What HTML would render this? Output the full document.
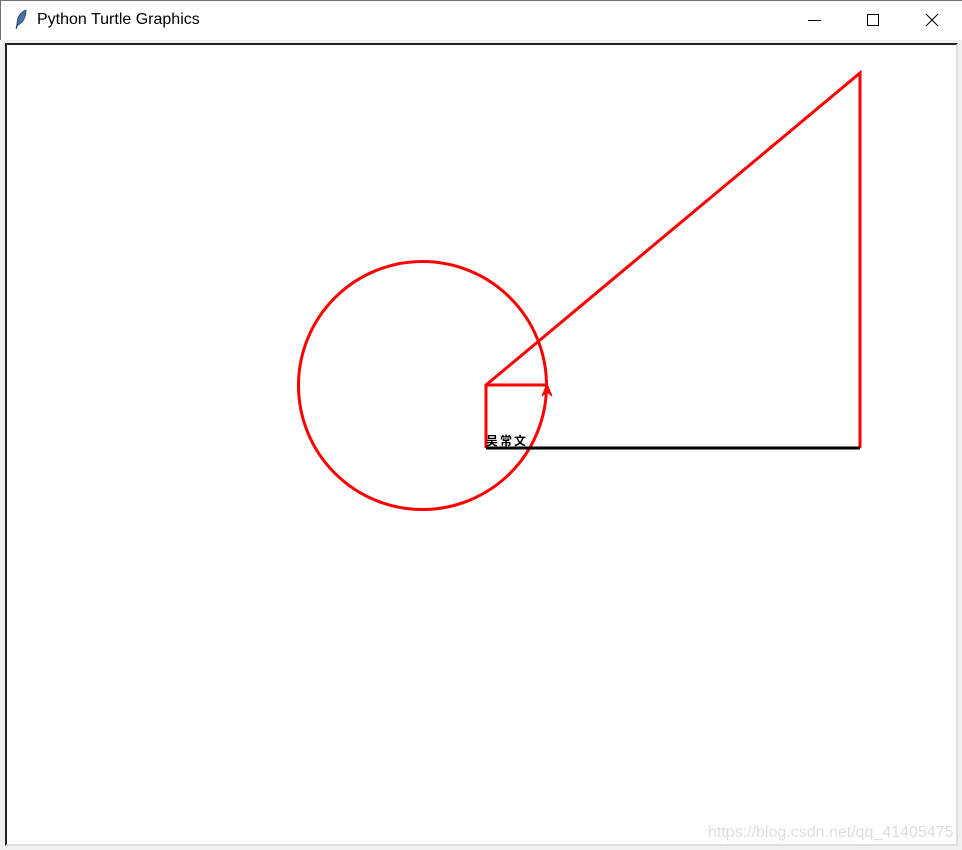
<!DOCTYPE html>
<html><head><meta charset="utf-8"><style>
body{margin:0;width:962px;height:850px;overflow:hidden;background:#f0f0f0;position:relative;font-family:"Liberation Sans",sans-serif}
#tb{position:absolute;left:0;top:0;width:962px;height:40px;background:#fff;border-top:1px solid #707070;box-sizing:border-box;border-left:1px solid #707070}
#title{position:absolute;left:36px;top:10px;font-size:16px;color:#000}
#cv{position:absolute;left:5px;top:43px;width:953px;height:803px;background:#fff;border-top:2px solid #222;border-left:2px solid #222;border-right:2px solid #ddd;border-bottom:2px solid #ddd;box-sizing:border-box}
</style></head><body>
<div id="tb">
<svg style="position:absolute;left:13px;top:8px" width="14" height="22" viewBox="0 0 14 22"><path d="M12 1 C6 3 3 9 3 15 L2 20 L4 16 C9 14 12 8 12 1Z" fill="#4a6fa5" stroke="#24406a" stroke-width="0.8"/></svg>
<div id="title">Python Turtle Graphics</div>
<svg style="position:absolute;left:800px;top:10px" width="150" height="20"><line x1="7" y1="9.5" x2="20" y2="9.5" stroke="#000"/><rect x="66.5" y="3.5" width="11" height="11" fill="none" stroke="#000"/><path d="M125 3 L137 15 M137 3 L125 15" stroke="#000"/></svg>
</div>
<div id="cv"></div>
<svg style="position:absolute;left:0;top:0" width="962" height="850">
<circle cx="422.5" cy="385.5" r="124" fill="none" stroke="#f00" stroke-width="3"/>
<polyline points="486,448 486,385 860,73 860,448" fill="none" stroke="#f00" stroke-width="3"/>
<line x1="486" y1="448" x2="860" y2="448" stroke="#000" stroke-width="3"/>
<line x1="486" y1="385" x2="547" y2="385" stroke="#f00" stroke-width="3"/>
<path d="M547 384 L542 396 L547 392 L552 396Z" fill="#f00" stroke="#f00"/>
<text x="486" y="445" font-size="12" font-weight="bold" font-family="'Noto Sans CJK SC',sans-serif" fill="#000" letter-spacing="2">吴常文</text>
<text x="708" y="837" font-size="16" fill="#ddd">https://blog.csdn.net/qq_41405475</text>
</svg>
</body></html>
